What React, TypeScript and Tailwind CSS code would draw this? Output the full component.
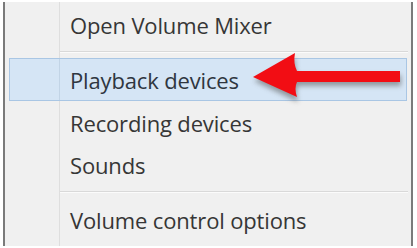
import React from "react";

const font = { fontFamily: '"Open Sans", "Noto Sans", sans-serif' };

function Row({ label, h }: { label: string; h: string }) {
  return (
    <div className={`flex ${h}`}>
      <div className="w-[55px] shrink-0 border-r border-[#dedede]" />
      <div className="flex items-center pl-[10px] pt-[3px] text-[22px] font-medium text-[#363636] tracking-[-0.15px]">{label}</div>
    </div>
  );
}

function Sep({ h }: { h: string }) {
  return (
    <div className={`flex ${h}`}>
      <div className="w-[55px] shrink-0 border-r border-[#dedede]" />
      <div className="flex flex-1 flex-col justify-center pr-[3px]">
        <div className="h-px bg-[#d9d9d9]" />
        <div className="h-px bg-[#fbfbfb]" />
      </div>
    </div>
  );
}

export default function App() {
  return (
    <div className="w-[417px] h-[248px] bg-white relative overflow-hidden" style={font}>
      <div className="ml-[3px] mt-[2px] w-[410px] h-[244px] border-x-2 border-[#7a7a7a] bg-[#f0f0f0] flex flex-col">
        <Row label="Open Volume Mixer" h="h-[44px]" />
        <Sep h="h-[12px]" />
        <div className="flex h-[43px] mx-[4px] border border-[#a9c6e4] bg-[#d5e5f5]">
          <div className="w-[50px] shrink-0 border-r border-[#c2d4e6]" />
          <div className="flex items-center pl-[10px] pt-[2px] text-[22px] font-medium text-[#2f3640] tracking-[-0.15px]">Playback devices</div>
        </div>
        <Row label="Recording devices" h="h-[42px]" />
        <Row label="Sounds" h="h-[42px]" />
        <Sep h="h-[14px]" />
        <Row label="Volume control options" h="h-[40px]" />
        <div className="flex flex-1">
          <div className="w-[55px] shrink-0 border-r border-[#dedede]" />
        </div>
      </div>
      <svg className="absolute left-0 top-0" width="417" height="248" viewBox="0 0 417 248">
        <defs>
          <filter id="sh" x="-20%" y="-20%" width="140%" height="160%">
            <feGaussianBlur stdDeviation="2.5" />
          </filter>
        </defs>
        <path
          d="M254 81 L296 58 Q294 68 298 75 L401 75 L401 86 L298 86 Q295 92 298 102 Z"
          fill="#5a5a5a"
          opacity="0.55"
          filter="url(#sh)"
        />
        <path
          d="M253 77 L295 53 Q293 63 297 71 L400 71 L400 82 L297 82 Q294 88 297 97 Z"
          fill="#f20d14"
        />
      </svg>
    </div>
  );
}
